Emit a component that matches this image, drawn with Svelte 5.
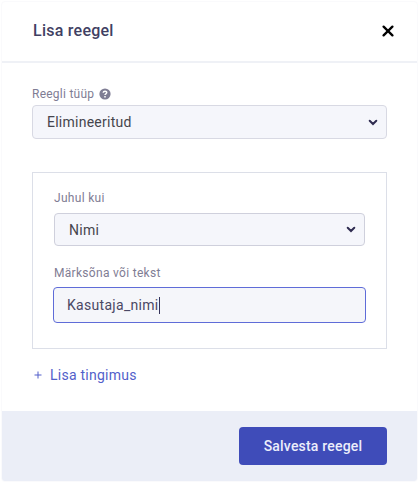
<script lang="ts">
	let ruleType = 'Elimineeritud';
	let condition = 'Nimi';
	let keyword = 'Kasutaja_nimi';
</script>

<div class="modal">
	<header>
		<h1>Lisa reegel</h1>
		<button class="close" aria-label="Sulge">
			<svg width="12" height="12" viewBox="0 0 12 12">
				<path d="M1.6 1.6 10.4 10.4M10.4 1.6 1.6 10.4" />
			</svg>
		</button>
	</header>

	<main>
		<div class="label">
			<span>Reegli tüüp</span>
			<svg class="help" width="12" height="12" viewBox="0 0 12 12">
				<circle cx="6" cy="6" r="5.6" />
				<path d="M4.2 4.7C4.4 2.6 7.9 2.7 7.7 4.8 7.6 5.9 6 5.8 6 7.1M6 8.1V9.4" />
			</svg>
		</div>
		<div class="select" role="button" tabindex="0">
			<span>{ruleType}</span>
			<svg class="chevron" width="10" height="7" viewBox="0 0 10 7">
				<path d="M1.7 1.8 5 5 8.3 1.8" />
			</svg>
		</div>

		<section>
			<div class="label wide">Juhul kui</div>
			<div class="select small" role="button" tabindex="0">
				<span>{condition}</span>
				<svg class="chevron" width="10" height="7" viewBox="0 0 10 7">
					<path d="M1.7 1.8 5 5 8.3 1.8" />
				</svg>
			</div>
			<div class="label wide second">Märksõna või tekst</div>
			<div class="input" role="textbox" tabindex="0">
				<span>{keyword}</span><i class="caret"></i>
			</div>
		</section>

		<button class="add">
			<svg width="8" height="8" viewBox="0 0 8 8">
				<path d="M4 .5v7M.5 4h7" />
			</svg>
			<span>Lisa tingimus</span>
		</button>
	</main>

	<footer>
		<button class="save">Salvesta reegel</button>
	</footer>
</div>

<style>
	:global(body) {
		background: #fff;
		font-family: Roboto, sans-serif;
	}

	:global(*) {
		box-sizing: border-box;
	}

	button {
		border: 0;
		padding: 0;
		background: none;
		font-family: inherit;
	}

	path {
		fill: none;
		stroke: currentColor;
	}

	.modal {
		display: flex;
		flex-direction: column;
		width: 417px;
		height: 481px;
		margin: 1px;
		border: 1px solid #fafafc;
		border-radius: 4px;
		overflow: hidden;
	}

	header {
		display: flex;
		flex: none;
		align-items: center;
		justify-content: space-between;
		height: 61px;
		padding: 0 23px 1px 31px;
		border-bottom: 2px solid #eff1f6;
	}

	h1 {
		margin: 0;
		color: #413f63;
		font-size: 16px;
		font-weight: 500;
		line-height: 20px;
		letter-spacing: 0.25px;
	}

	.close {
		display: flex;
		color: #000;
	}

	.close path {
		stroke-width: 2.3;
		stroke-linecap: round;
	}

	main {
		flex: 1;
		padding: 22px 30px 0;
	}

	.label {
		display: flex;
		align-items: center;
		height: 18px;
		color: #7f7d94;
		font-size: 12px;
		line-height: 18px;
		letter-spacing: 0.25px;
	}

	.label.wide {
		letter-spacing: 0.3px;
	}

	.help {
		margin-left: 5px;
		color: #fff;
	}

	.help circle {
		fill: #7f7d94;
	}

	.help path {
		stroke-width: 1.5;
	}

	.select {
		display: flex;
		align-items: center;
		justify-content: space-between;
		height: 34px;
		margin-top: 2px;
		padding: 0 8px 0 14px;
		border: 1px solid #d8d9e3;
		border-radius: 4px;
		background: #f5f6fb;
		color: #45454c;
		font-size: 14px;
		letter-spacing: 0.25px;
	}

	.select.small {
		height: 33px;
		margin-top: 6px;
		border-color: #cfd0dc;
	}

	.chevron {
		color: #2f2c50;
	}

	.chevron path {
		stroke-width: 2;
		stroke-linecap: round;
	}

	section {
		height: 177px;
		margin-top: 33px;
		padding: 16px 21px 0;
		border: 1px solid #dcdfe8;
	}

	.label.second {
		margin-top: 18px;
	}

	.input {
		display: flex;
		align-items: center;
		height: 36px;
		margin: 5px -1px 0;
		padding-left: 13px;
		border: 1px solid #5f6cd8;
		border-radius: 4px;
		background: #f5f6fa;
		color: #4a4864;
		font-size: 14px;
		letter-spacing: 0.3px;
	}

	.caret {
		width: 1px;
		height: 17px;
		background: #36345a;
	}

	.add {
		display: flex;
		align-items: center;
		gap: 8px;
		height: 20px;
		margin: 16px 0 0 2px;
		color: #525fca;
		font-size: 14px;
		letter-spacing: 0.25px;
	}

	footer {
		display: flex;
		flex: none;
		justify-content: flex-end;
		height: 71px;
		margin: 0 -1px -1px;
		padding: 16px 31px 0;
		background: #ebeef7;
	}

	.save {
		width: 148px;
		height: 38px;
		border-radius: 4px;
		background: #3f4cb9;
		color: #eceefb;
		font-size: 14px;
		font-weight: 500;
		letter-spacing: 0.2px;
	}
</style>
